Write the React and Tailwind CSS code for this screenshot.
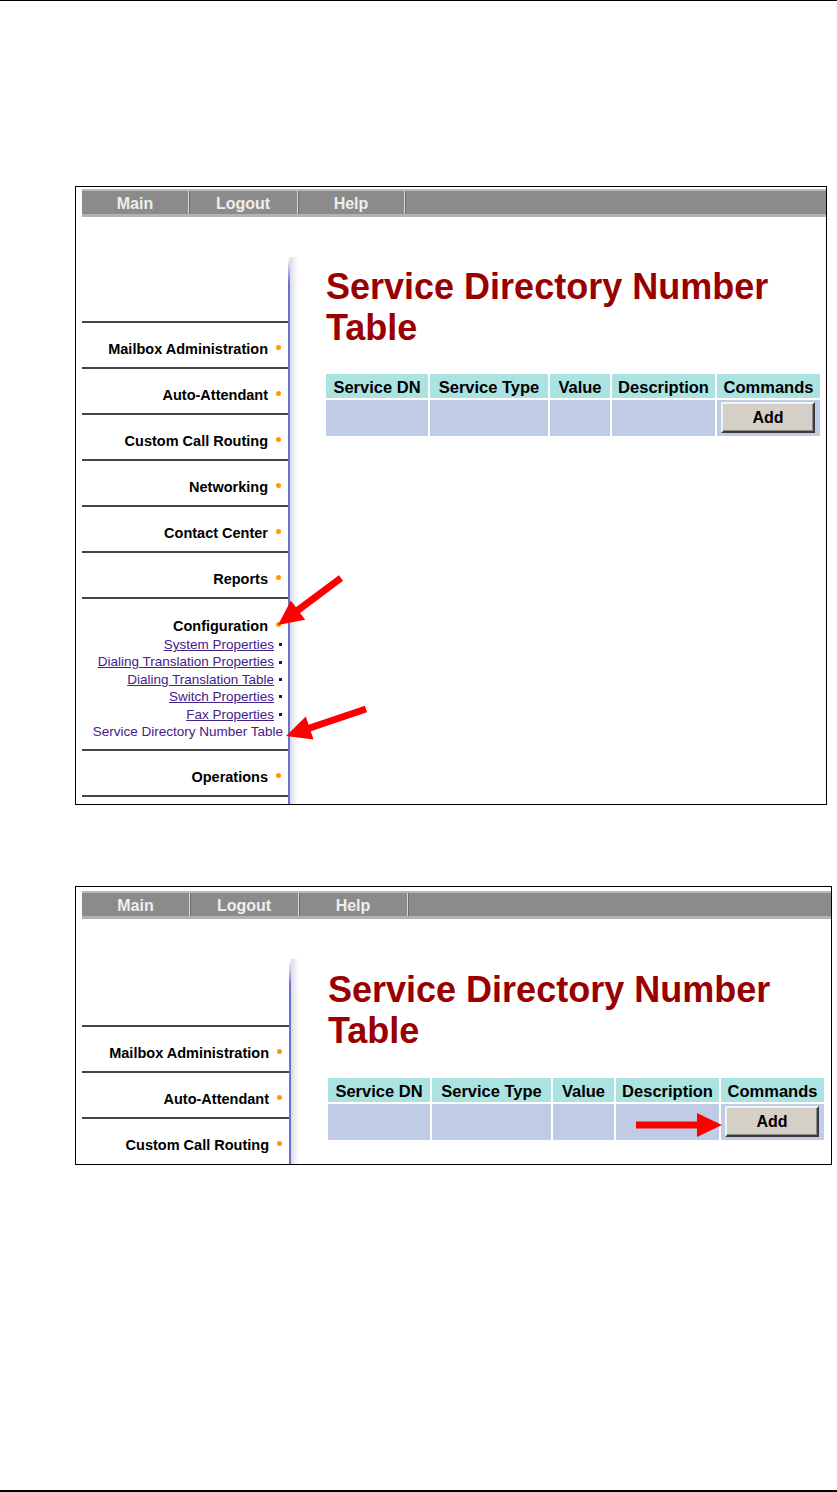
import React from "react";

const V1 = {
  frame: "ml-[75px] mt-[185px] w-[752px] h-[619px]",
  nav: "ml-[6px] mt-[2px]",
  cells: ["w-[107px]", "w-[109px]", "w-[107px]"],
  spacer: "h-[104px]",
  side: "w-[206px]",
  main: "pl-[28px]",
  title: "mt-[49px]",
  table: "mt-[26px] grid-cols-[102px_118px_60px_103px_103px]",
  full: true,
};

const V2 = {
  frame: "ml-[75px] mt-[81px] w-[757px] h-[279px]",
  nav: "ml-[6px] mt-[4px]",
  cells: ["w-[108px]", "w-[109px]", "w-[109px]"],
  spacer: "h-[106px]",
  side: "w-[207px]",
  main: "pl-[29px]",
  title: "mt-[50px]",
  table: "mt-[27px] grid-cols-[102px_119px_61px_103px_103px]",
  full: false,
};

function NavBar({ v }) {
  const items = ["Main", "Logout", "Help"];
  return (
    <div className={"flex flex-col h-[28px] " + v.nav}>
      <div className="h-[2px] bg-[#b9b9b9]" />
      <div className="flex h-[23px] bg-[#8b8b8b]">
        {items.map((t, i) => (
          <div
            key={t}
            className={
              "flex items-center justify-center pt-[2px] border-r border-r-[#d8d8d8] shadow-[1px_0_0_#6c6c6c] text-[16px] font-bold leading-[21px] text-[#eeeeee] " +
              v.cells[i]
            }
          >
            {t}
          </div>
        ))}
      </div>
      <div className="h-[3px] bg-[#b3b3b3]" />
    </div>
  );
}

function Dot() {
  return <span className="ml-[8px] mb-[3px] w-[5px] h-[5px] rounded-full bg-[#ff9900] shrink-0" />;
}

function MenuItem({ label, last }) {
  return (
    <div
      className={
        "flex items-center justify-end border-t-2 border-t-[#454545] pt-[17px] pb-[9px] pr-[7px] " +
        (last ? "border-b-2 border-b-[#454545]" : "")
      }
    >
      <span className="text-[14.5px] font-bold leading-[18px] text-black whitespace-nowrap">{label}</span>
      <Dot />
    </div>
  );
}

function ConfigSection() {
  const subs = [
    "System Properties",
    "Dialing Translation Properties",
    "Dialing Translation Table",
    "Switch Properties",
    "Fax Properties",
  ];
  return (
    <div className="flex flex-col items-end border-t-2 border-t-[#454545] pt-[18px] pb-[9px]">
      <div className="flex items-center pr-[7px] mb-[1px]">
        <span className="text-[14.5px] font-bold leading-[18px] text-black">Configuration</span>
        <Dot />
      </div>
      {subs.map((s) => (
        <div key={s} className="flex items-center pr-[6px] leading-[17.4px] text-[13.5px]">
          <span className="underline text-[#43218a] whitespace-nowrap">{s}</span>
          <span className="ml-[5px] w-[3px] h-[3px] bg-[#2b0a66]" />
        </div>
      ))}
      <div className="pr-[5px] leading-[17.4px] text-[13.5px] text-[#43218a] whitespace-nowrap">
        Service Directory Number Table
      </div>
    </div>
  );
}

function Screen({ v }) {
  const heads = ["Service DN", "Service Type", "Value", "Description", "Commands"];
  return (
    <div className={"flex flex-col border border-black overflow-hidden bg-white " + v.frame}>
      <NavBar v={v} />
      <div className="flex flex-1">
        <div className={"flex flex-col ml-[6px] shrink-0 " + v.side}>
          <div className={v.spacer} />
          <MenuItem label="Mailbox Administration" />
          <MenuItem label="Auto-Attendant" />
          <MenuItem label="Custom Call Routing" />
          {v.full && (
            <>
              <MenuItem label="Networking" />
              <MenuItem label="Contact Center" />
              <MenuItem label="Reports" />
              <ConfigSection />
              <MenuItem label="Operations" last />
            </>
          )}
        </div>
        <div className="w-[2px] mt-[40px] shrink-0 bg-[linear-gradient(to_bottom,#ffffff,#6f6fd2_26px)]" />
        <div className="w-[8px] mt-[40px] shrink-0 bg-[linear-gradient(to_right,#dcdcea,#ffffff)]" />
        <div className={"flex flex-col flex-1 " + v.main}>
          <h1 className={"text-[36px] font-bold leading-[41px] text-[#990000] " + v.title}>
            Service Directory Number
            <br />
            Table
          </h1>
          <div className={"grid gap-[2px] w-max " + v.table}>
            {heads.map((h) => (
              <div
                key={h}
                className="h-[24px] pt-[2px] bg-[#abe3e3] text-center text-[16.5px] font-bold leading-[22px] text-black whitespace-nowrap"
              >
                {h}
              </div>
            ))}
            <div className="h-[36px] bg-[#c0cbe6]" />
            <div className="h-[36px] bg-[#c0cbe6]" />
            <div className="h-[36px] bg-[#c0cbe6]" />
            <div className="h-[36px] bg-[#c0cbe6]" />
            <div className="h-[36px] bg-[#c0cbe6] pl-[4px] pr-[5px] pt-[2px] pb-[3px]">
              <div className="flex h-full items-center justify-center pt-[1px] bg-[#d4d0c8] border-2 border-t-[#f4f4f4] border-l-[#f4f4f4] border-b-[#3c3c3c] border-r-[#3c3c3c] shadow-[inset_-1px_-1px_0_#8a8a8a] text-[16px] font-bold text-black">
                Add
              </div>
            </div>
          </div>
        </div>
      </div>
    </div>
  );
}

function arrowPoints(tx, ty, px, py) {
  const dx = px - tx;
  const dy = py - ty;
  const len = Math.hypot(dx, dy);
  const ux = dx / len;
  const uy = dy / len;
  const nx = -uy;
  const ny = ux;
  const w = 3.5;
  const L = 25;
  const H = 12;
  const bx = px - ux * L;
  const by = py - uy * L;
  const pts = [
    [tx + nx * w, ty + ny * w],
    [bx + nx * w, by + ny * w],
    [bx + nx * H, by + ny * H],
    [px, py],
    [bx - nx * H, by - ny * H],
    [bx - nx * w, by - ny * w],
    [tx - nx * w, ty - ny * w],
  ];
  return pts.map((p) => p[0].toFixed(1) + "," + p[1].toFixed(1)).join(" ");
}

export default function App() {
  const arrows = [
    [341, 577, 278, 624],
    [366, 708, 286, 735],
    [636, 1124, 722, 1124],
  ];
  return (
    <div className="relative flex flex-col w-[837px] h-[1492px] bg-white border-t border-black font-['Liberation_Sans',Arial,sans-serif]">
      <Screen v={V1} />
      <Screen v={V2} />
      <div className="mt-auto h-[2px] bg-black" />
      <svg
        className="absolute left-0 top-0 pointer-events-none"
        width="837"
        height="1492"
        viewBox="0 0 837 1492"
      >
        {arrows.map((a, i) => (
          <polygon key={i} points={arrowPoints(a[0], a[1], a[2], a[3])} fill="#ff0000" />
        ))}
      </svg>
    </div>
  );
}
